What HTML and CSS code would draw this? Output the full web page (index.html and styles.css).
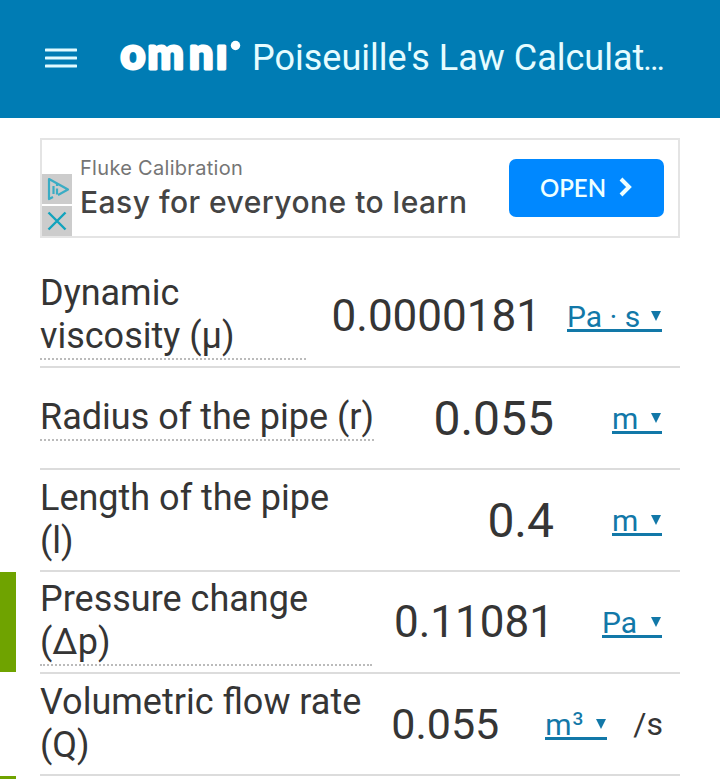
FILE: index.html
```html
<!DOCTYPE html>
<html lang="en">
<head>
    <meta charset="UTF-8">
    <meta name="viewport" content="width=device-width, initial-scale=1.0">
    <title>Poiseuille's Law Calculator</title>
    <link rel="stylesheet" href="styles.css">
</head>
<body>

    <header class="header">
        <svg class="menu-icon" width="32" height="20" viewBox="0 0 32 20">
            <path d="M1 2h30M1 10h30M1 18h30" stroke="#e0faff" stroke-width="3" stroke-linecap="round"/>
        </svg>
        <svg class="logo" width="122" height="36" viewBox="0 0 122 36">
            <text class="logo-text" x="0.500 27.500 69 96" y="29">omnı</text>
            <circle cx="115.500" cy="5.500" r="4.700" fill="#fff"/>
        </svg>
        <h1 class="title">Poiseuille's Law Calculat<span class="dots">…</span></h1>
    </header>

    <div class="container">
        <div class="ad">
            <div class="ad-icons">
                <div class="ad-icon">
                    <svg width="30" height="30" viewBox="0 0 30 30" fill="none" stroke="#3aacc4" stroke-width="2.200" stroke-linejoin="round">
                        <path d="M11 23l-4 2V5l19 10.500-10 5.500M11.500 20v-8M15 10v2M15 14.500v6"/>
                    </svg>
                </div>
                <div class="ad-icon">
                    <svg width="30" height="30" viewBox="0 0 30 30" stroke="#12a3bd" stroke-width="2.400">
                        <path d="M6.500 6.500l17 17M23.500 6.500l-17 17"/>
                    </svg>
                </div>
            </div>
            <div class="ad-text">
                <div class="ad-brand">Fluke Calibration</div>
                <div class="ad-title">Easy for everyone to learn</div>
            </div>
            <button class="ad-button">
                <span>OPEN</span>
                <svg width="14" height="20" viewBox="0 0 14 20" fill="none" stroke="#eff" stroke-width="4">
                    <path d="M2 2l8 8-8 8"/>
                </svg>
            </button>
        </div>

        <div class="row">
            <div class="label label-viscosity dotted">Dynamic<br>viscosity (μ)</div>
            <div class="value">0.0000181</div>
            <a class="unit unit-pas">Pa · s<span class="arrow"></span></a>
        </div>
        <div class="row">
            <div class="label label-radius dotted">Radius of the pipe (r)</div>
            <div class="value value-large">0.055</div>
            <a class="unit unit-m">m<span class="arrow"></span></a>
        </div>
        <div class="row">
            <div class="label">Length of the pipe<br>(l)</div>
            <div class="value value-large">0.4</div>
            <a class="unit unit-m">m<span class="arrow"></span></a>
        </div>
        <div class="row changed">
            <div class="label label-pressure dotted">Pressure change<br>(Δp)</div>
            <div class="value">0.11081</div>
            <a class="unit unit-pa">Pa<span class="arrow"></span></a>
        </div>
        <div class="row">
            <div class="label">Volumetric flow rate<br>(Q)</div>
            <div class="value value-small">0.055</div>
            <a class="unit unit-m3"><span>m<span class="power">3</span></span><span class="arrow"></span></a>
            <span class="per">/s</span>
        </div>
        <div class="row row-last changed"></div>
    </div>

</body>
</html>
```
FILE: styles.css
```css
/* General Styles */
* {
    box-sizing: border-box;
}

body {
    font-family: Roboto, sans-serif;
    background-color: #fff;
    color: #353535;
    margin: 0;
}

/* Header */
.header {
    display: flex;
    align-items: center;
    height: 118px;
    padding: 0 45px 2px;
    background-color: #007cb4;
}

.menu-icon {
    margin-right: 43px;
    flex: none;
}

.logo {
    margin-right: 10px;
    flex: none;
    overflow: visible;
}

.logo-text {
    font-family: Lato, sans-serif;
    font-size: 43px;
    font-weight: 900;
    fill: #fff;
    stroke: #fff;
    stroke-width: 3px;
    stroke-linejoin: round;
}

.title {
    margin: 0;
    font-size: 36px;
    font-weight: 400;
    color: #e6fcff;
    white-space: nowrap;
}

.dots {
    font-size: 32px;
    margin-left: -1px;
}

.container {
    padding: 20px 40px 0;
}

/* Ad */
.ad {
    display: flex;
    align-items: center;
    height: 100px;
    margin-bottom: 28px;
    border: 2px solid #e4e4e4;
    padding-right: 14px;
}

.ad-icons {
    align-self: flex-end;
    display: flex;
    flex-direction: column;
    gap: 2px;
    margin-right: 8px;
}

.ad-icon {
    width: 30px;
    height: 30px;
    background-color: #ccc;
}

.ad-icon svg {
    display: block;
}

.ad-text {
    font-family: Inter, sans-serif;
    white-space: nowrap;
    padding-top: 2px;
}

.ad-brand {
    font-size: 20px;
    line-height: 26px;
    letter-spacing: 0.3px;
    color: #757575;
}

.ad-title {
    font-size: 30px;
    line-height: 42px;
    font-weight: 500;
    letter-spacing: 0.47px;
    color: #444;
}

.ad-button {
    display: flex;
    align-items: center;
    justify-content: center;
    gap: 13px;
    width: 155px;
    height: 58px;
    margin-left: auto;
    padding: 0 0 2px;
    border: none;
    border-radius: 7px;
    background-color: #0088ff;
    color: #eff;
    font-family: Lato, sans-serif;
    font-size: 24px;
    font-weight: 600;
}

/* Calculator Rows */
.row {
    position: relative;
    display: flex;
    align-items: center;
    height: 102px;
    border-bottom: 2px solid #dcdcdc;
    white-space: nowrap;
}

.row-last {
    height: 3px;
    border-bottom: none;
    overflow-y: clip;
}

.changed::before {
    content: "";
    position: absolute;
    left: -40px;
    top: 0;
    width: 16px;
    height: 100px;
    background-color: #6fa300;
}

.label {
    font-size: 36px;
    line-height: 43px;
}

.dotted {
    border-bottom: 2px dotted #bbb;
}

.label-viscosity {
    width: 266px;
}

.label-radius {
    width: 334px;
}

.label-pressure {
    width: 332px;
}

.value {
    margin-left: auto;
    font-size: 44px;
}

.value-large {
    font-size: 48px;
}

.value-small {
    font-size: 43px;
}

/* Units */
.unit {
    display: flex;
    align-items: center;
    justify-content: space-between;
    height: 31px;
    margin-right: 18px;
    padding-top: 3px;
    border-bottom: 3px solid #1278a8;
    color: #1278a8;
    font-size: 30px;
}

.arrow {
    margin-right: 1px;
    border: 5px solid transparent;
    border-top: 10px solid #1278a8;
    border-bottom: none;
}

.unit-pas {
    width: 95px;
    margin-left: 26px;
}

.unit-m {
    width: 50px;
    margin-left: 58px;
}

.unit-pa {
    width: 60px;
    margin-left: 48px;
}

.unit-m3 {
    width: 62px;
    margin-left: 46px;
    margin-right: 26px;
}

.power {
    font-size: 19px;
    font-weight: 500;
    vertical-align: 10px;
    line-height: 0;
    margin-left: 1px;
}

.per {
    margin-right: 17px;
    font-size: 32px;
}
```
